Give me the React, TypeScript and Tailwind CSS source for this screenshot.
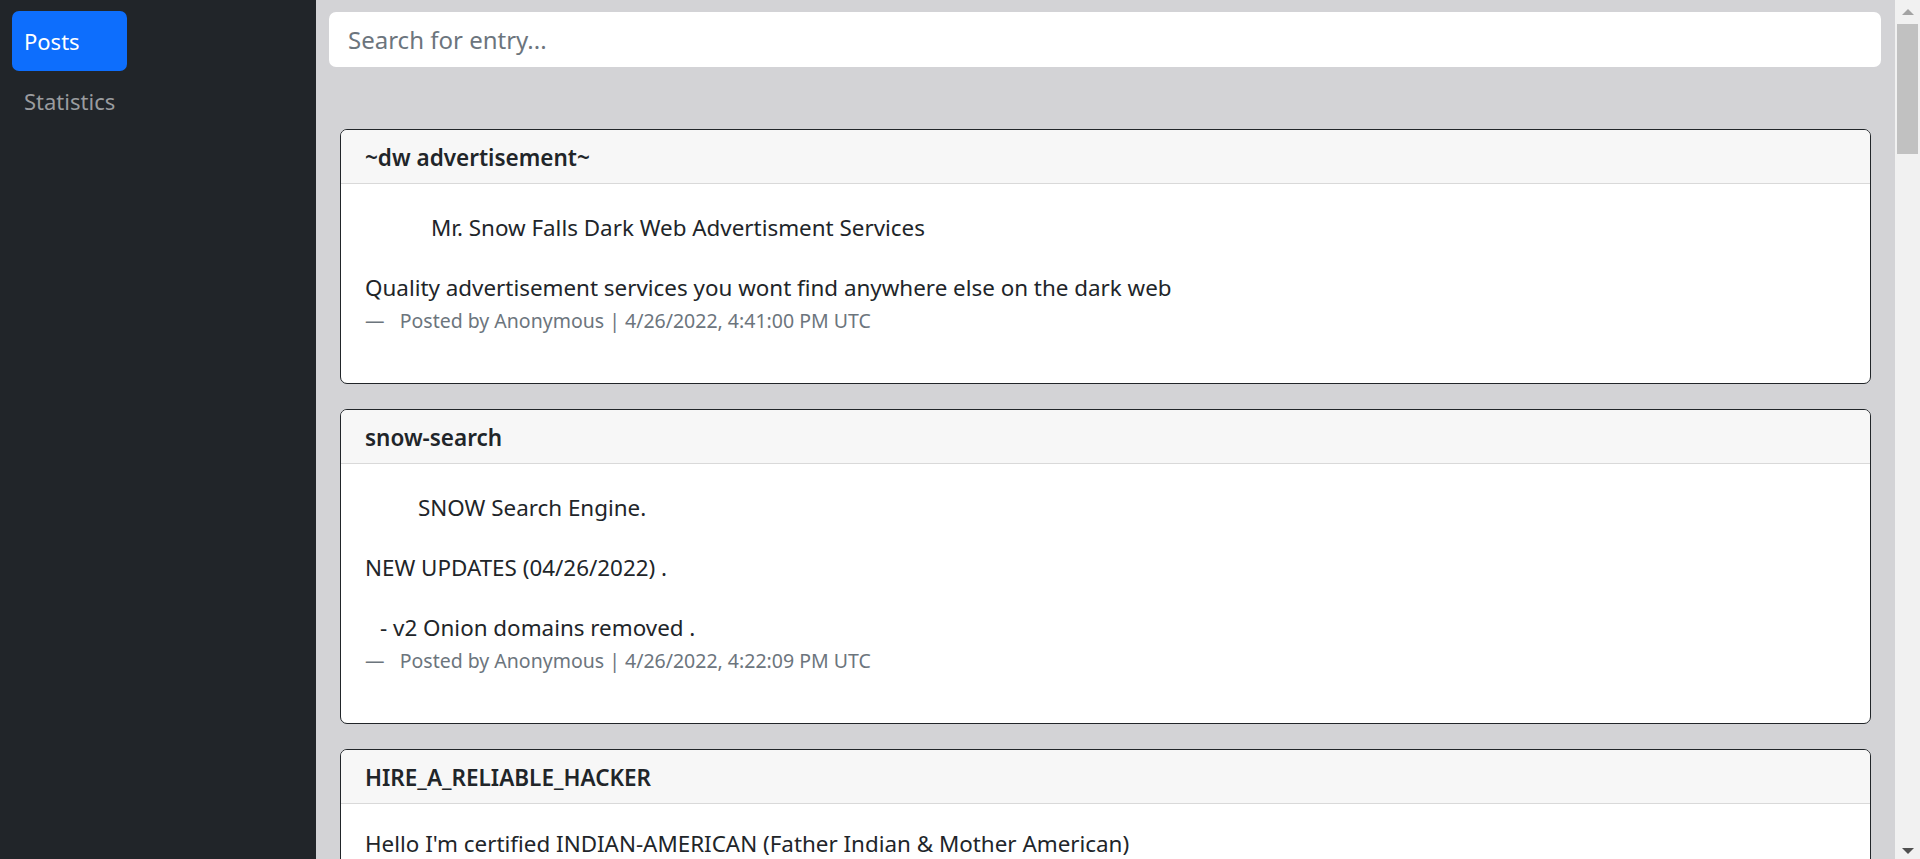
import { useState } from 'react';

interface Post {
    id: number;
    title: string;
    padTop: string;
    lines: Array<{ text: string; indent?: string }>;
    date: string;
}

const posts: Post[] = [
    {
        id: 1,
        title: '~dw advertisement~',
        padTop: 'pt-[29px]',
        lines: [
            { text: 'Mr. Snow Falls Dark Web Advertisment Services', indent: 'pl-[66px]' },
            { text: '' },
            { text: 'Quality advertisement services you wont find anywhere else on the dark web' },
        ],
        date: '4/26/2022, 4:41:00 PM UTC',
    },
    {
        id: 2,
        title: 'snow-search',
        padTop: 'pt-[29px]',
        lines: [
            { text: 'SNOW Search Engine.', indent: 'pl-[53px]' },
            { text: '' },
            { text: 'NEW UPDATES (04/26/2022) .' },
            { text: '' },
            { text: '- v2 Onion domains removed .', indent: 'pl-[15px]' },
        ],
        date: '4/26/2022, 4:22:09 PM UTC',
    },
    {
        id: 3,
        title: 'HIRE_A_RELIABLE_HACKER',
        padTop: 'pt-[25px]',
        lines: [
            { text: "Hello I'm certified INDIAN-AMERICAN (Father Indian & Mother American)" },
        ],
        date: '4/26/2022, 3:58:41 PM UTC',
    },
];

function PostCard({ post }: { post: Post }) {
    return (
        <div className="rounded-[7px] border border-[#212529] bg-white overflow-hidden shrink-0">
            {/* Header */}
            <div className="flex h-[54px] items-center border-b border-[#d9d9d9] bg-[#f7f7f7] px-[24px] pt-[3px]">
                <h5 className="text-[22.5px] font-semibold text-[#212529]">{post.title}</h5>
            </div>

            {/* Body */}
            <div className={`${post.padTop} px-[24px] pb-[47px] text-[22.4px] leading-[30px] text-[#212529]`}>
                {post.lines.map((line, i) => (
                    <p key={i} className={`h-[30px] whitespace-pre ${line.indent ?? ''}`}>
                        {line.text}
                    </p>
                ))}
                <footer className="mt-[3px] text-[19.5px] leading-[30px] text-[#6c757d]">
                    —&nbsp;&nbsp;&nbsp;Posted by Anonymous | {post.date}
                </footer>
            </div>
        </div>
    );
}

export default function App() {
    const [query, setQuery] = useState('');
    const filtered = posts.filter((p) => p.title.toLowerCase().includes(query.toLowerCase()));

    return (
        <div className="flex h-[859px] w-full overflow-hidden font-['Noto_Sans',sans-serif]">
            {/* Sidebar */}
            <aside className="w-[316px] shrink-0 bg-[#212529] px-[12px] pt-[11px]">
                <nav className="flex flex-col">
                    <a className="flex h-[60px] w-[115px] items-center rounded-[7px] bg-[#0d6efd] px-[12px] text-[22px] text-white">
                        Posts
                    </a>
                    <a className="flex h-[60px] items-center px-[12px] text-[22px] text-[#9a9c9f]">
                        Statistics
                    </a>
                </nav>
            </aside>

            {/* Main */}
            <main className="flex min-w-0 flex-1 flex-col bg-[#d3d3d6]">
                <div className="ml-[13px] mr-[14px] mt-[12px]">
                    <input
                        type="text"
                        value={query}
                        onChange={(e) => setQuery(e.target.value)}
                        placeholder="Search for entry..."
                        className="h-[55px] w-full rounded-[7px] bg-white px-[19px] text-[24px] text-[#212529] placeholder-[#6c757d] outline-none"
                    />
                </div>

                <div className="mt-[62px] flex flex-col gap-[25px] px-[24px]">
                    {filtered.map((post) => (
                        <PostCard key={post.id} post={post} />
                    ))}
                </div>
            </main>

            {/* Scrollbar */}
            <div className="flex w-[25px] shrink-0 flex-col items-center bg-[#f1f1f1]">
                <div className="mt-[9px] h-0 w-0 border-x-[6px] border-b-[6px] border-x-transparent border-b-[#a3a3a3]" />
                <div className="mt-[9px] h-[130px] w-[21px] bg-[#c1c1c1]" />
                <div className="flex-1" />
                <div className="mb-[5px] h-0 w-0 border-x-[6px] border-t-[6px] border-x-transparent border-t-[#505050]" />
            </div>
        </div>
    );
}
